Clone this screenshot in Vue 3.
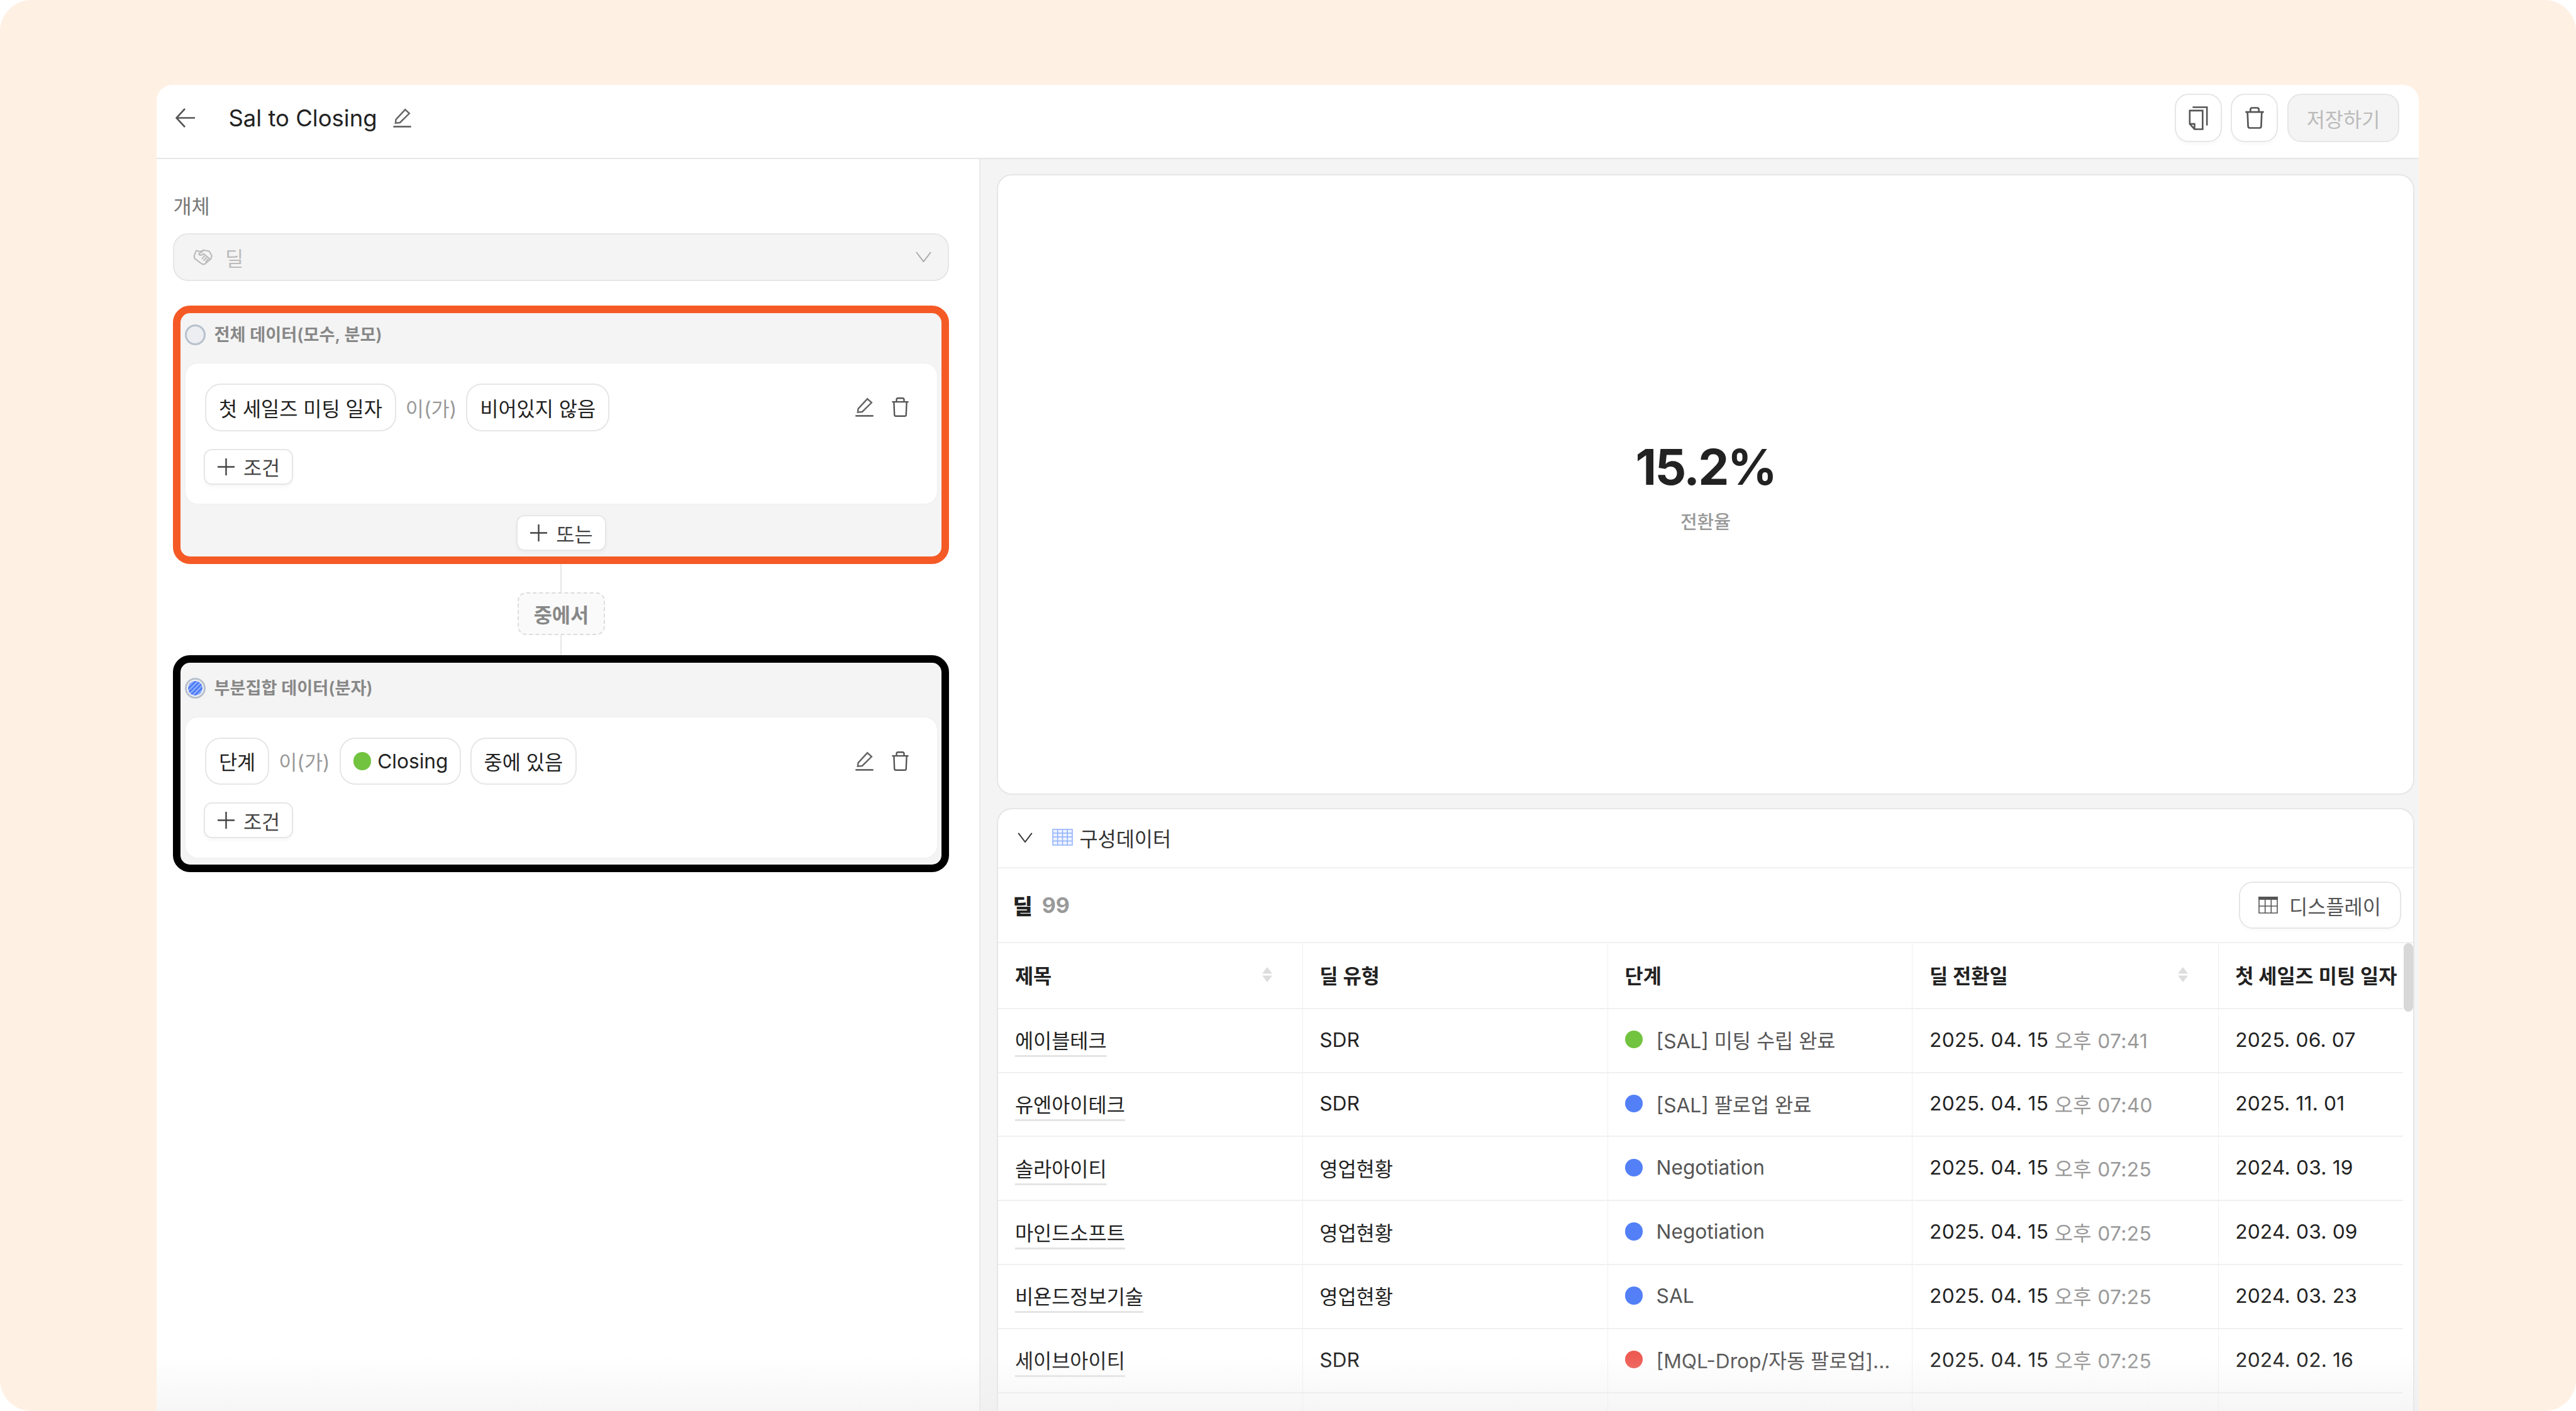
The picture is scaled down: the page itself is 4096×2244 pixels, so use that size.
<template>
  <div class="page">
    <div class="window">
      <header class="topbar">
        <svg class="back" viewBox="0 0 31 31" fill="none" stroke="#555" stroke-width="2.6">
          <path d="M31 15.5H2M15 1 1.5 15.5 15 30" />
        </svg>
        <span class="title">Sal to Closing</span>
        <svg class="edit title-edit" viewBox="0 0 24 24" fill="none" stroke="#666" stroke-width="1.9">
          <path d="M3.8 18.3 4.3 14 15.6 1.8 20.8 6.5 9.3 17.8Z" />
          <path d="M1 22.8H23" stroke-width="2.2" />
        </svg>
        <div class="top-actions">
          <button class="icon-btn">
            <svg class="copy" viewBox="0 0 20 25" fill="none" stroke="#555" stroke-width="1.7">
              <path d="M4 1H19V20" />
              <path d="M1 4.5H14.5V24H6L1 18.5Z" />
              <path d="M1 18.5H6V24" />
            </svg>
          </button>
          <button class="icon-btn">
            <svg class="trash big" viewBox="0 0 24 26" fill="none" stroke="#555" stroke-width="2">
              <path d="M1 6H23" />
              <path d="M7 6V3a2 2 0 0 1 2-2h6a2 2 0 0 1 2 2v3" />
              <path d="M3.5 6l.7 17a2 2 0 0 0 2 2h11.6a2 2 0 0 0 2-2l.7-17" />
            </svg>
          </button>
          <button class="save-btn">저장하기</button>
        </div>
      </header>

      <div class="body">
        <aside class="left">
          <div class="field-label">개체</div>
          <div class="select">
            <svg class="handshake" viewBox="0 0 38 31" fill="none" stroke="#bbb" stroke-width="2.6" stroke-linejoin="round">
              <path d="M2 13 6 3l8 2 6-3 11 2 5 9-2 6-12 10q-4 1-7-2L3 18Z" />
              <path d="M20 3 11 9q1 4 6 2l3-2 12 10" />
              <path d="M26 16l-6 6M29 19l-5 6M22 13l-5 6" />
            </svg>
            <span class="select-text">딜</span>
            <svg class="chev select-chev" viewBox="0 0 25 17" fill="none" stroke="#aaa" stroke-width="2">
              <path d="M1 1 12.5 16 24 1" />
            </svg>
          </div>

          <section class="card orange">
            <div class="card-head">
              <span class="radio"></span>
              <span>전체 데이터(모수, 분모)</span>
            </div>
            <div class="filter-box">
              <div class="filter-row">
                <span class="pill">첫 세일즈 미팅 일자</span>
                <span class="muted">이(가)</span>
                <span class="pill">비어있지 않음</span>
                <div class="row-icons">
                  <svg class="edit" viewBox="0 0 24 24" fill="none" stroke="#666" stroke-width="1.9">
                    <path d="M3.8 18.3 4.3 14 15.6 1.8 20.8 6.5 9.3 17.8Z" />
                    <path d="M1 22.8H23" stroke-width="2.2" />
                  </svg>
                  <svg class="trash" viewBox="0 0 24 26" fill="none" stroke="#555" stroke-width="2">
                    <path d="M1 6H23" />
                    <path d="M7 6V3a2 2 0 0 1 2-2h6a2 2 0 0 1 2 2v3" />
                    <path d="M3.5 6l.7 17a2 2 0 0 0 2 2h11.6a2 2 0 0 0 2-2l.7-17" />
                  </svg>
                </div>
              </div>
              <button class="add-btn">
                <svg class="plus" viewBox="0 0 27 27" stroke="#444" stroke-width="2.4"><path d="M13.5 0V27M0 13.5H27" /></svg>
                조건
              </button>
            </div>
            <div class="or-row">
              <button class="add-btn">
                <svg class="plus" viewBox="0 0 27 27" stroke="#444" stroke-width="2.4"><path d="M13.5 0V27M0 13.5H27" /></svg>
                또는
              </button>
            </div>
          </section>

          <div class="connector">
            <span class="line first"></span>
            <span class="among">중에서</span>
            <span class="line second"></span>
          </div>

          <section class="card black">
            <div class="card-head">
              <span class="radio on"></span>
              <span>부분집합 데이터(분자)</span>
            </div>
            <div class="filter-box">
              <div class="filter-row">
                <span class="pill">단계</span>
                <span class="muted">이(가)</span>
                <span class="pill dotted"><i class="dot green"></i>Closing</span>
                <span class="pill">중에 있음</span>
                <div class="row-icons">
                  <svg class="edit" viewBox="0 0 24 24" fill="none" stroke="#666" stroke-width="1.9">
                    <path d="M3.8 18.3 4.3 14 15.6 1.8 20.8 6.5 9.3 17.8Z" />
                    <path d="M1 22.8H23" stroke-width="2.2" />
                  </svg>
                  <svg class="trash" viewBox="0 0 24 26" fill="none" stroke="#555" stroke-width="2">
                    <path d="M1 6H23" />
                    <path d="M7 6V3a2 2 0 0 1 2-2h6a2 2 0 0 1 2 2v3" />
                    <path d="M3.5 6l.7 17a2 2 0 0 0 2 2h11.6a2 2 0 0 0 2-2l.7-17" />
                  </svg>
                </div>
              </div>
              <button class="add-btn">
                <svg class="plus" viewBox="0 0 27 27" stroke="#444" stroke-width="2.4"><path d="M13.5 0V27M0 13.5H27" /></svg>
                조건
              </button>
            </div>
          </section>
        </aside>

        <main class="right">
          <section class="metric">
            <div class="metric-value">15.2%</div>
            <div class="metric-label">전환율</div>
          </section>

          <section class="data">
            <div class="data-head">
              <svg class="chev data-chev" viewBox="0 0 25 17" fill="none" stroke="#333" stroke-width="2">
                <path d="M1 1 12.5 16 24 1" />
              </svg>
              <svg class="grid-icon" viewBox="0 0 33 27" fill="#eef3ff" stroke="#8fb0fb" stroke-width="1.5">
                <rect x="1" y="1" width="31" height="25" />
                <path d="M1 7H32M1 13H32M1 19.5H32M8.7 1V26M16.5 1V26M24.2 1V26" fill="none" />
              </svg>
              <span>구성데이터</span>
            </div>

            <div class="toolbar">
              <div class="count"><b>딜</b><span>99</span></div>
              <button class="display-btn">
                <svg class="display-icon" viewBox="0 0 31 27" fill="none" stroke="#555" stroke-width="1.6">
                  <path d="M0 2.5H31" stroke-width="5" />
                  <path d="M1 5V26H30V5M1 15H30M10.7 5V26M20.3 5V26" />
                </svg>
                디스플레이
              </button>
            </div>

            <div class="table">
              <div class="tr th">
                <div v-for="col in columns" :key="col.label" class="cell">
                  <span>{{ col.label }}</span>
                  <svg v-if="col.sort" class="sort" viewBox="0 0 16 24" fill="#ddd">
                    <path d="M8 0 16 10.5H0ZM8 24 0 13.5H16Z" />
                  </svg>
                </div>
              </div>
              <div v-for="row in rows" :key="row.name" class="tr">
                <div class="cell"><span class="name">{{ row.name }}</span></div>
                <div class="cell">{{ row.type }}</div>
                <div class="cell stage"><i class="dot" :class="row.color"></i>{{ row.stage }}</div>
                <div class="cell date">{{ row.date }}&nbsp;<span class="time">{{ row.time }}</span></div>
                <div class="cell first-date">{{ row.first }}</div>
              </div>
              <div class="tr">
                <div v-for="n in 5" :key="n" class="cell"></div>
              </div>
              <div class="scroll-thumb"></div>
            </div>
          </section>
        </main>
      </div>
      <div class="fade"></div>
    </div>
  </div>
</template>

<script setup>
const columns = [
  { label: "제목", sort: true },
  { label: "딜 유형" },
  { label: "단계" },
  { label: "딜 전환일", sort: true },
  { label: "첫 세일즈 미팅 일자" },
];

const rows = [
  { name: "에이블테크", type: "SDR", color: "green", stage: "[SAL] 미팅 수립 완료", date: "2025. 04. 15", time: "오후 07:41", first: "2025. 06. 07" },
  { name: "유엔아이테크", type: "SDR", color: "blue", stage: "[SAL] 팔로업 완료", date: "2025. 04. 15", time: "오후 07:40", first: "2025. 11. 01" },
  { name: "솔라아이티", type: "영업현황", color: "blue", stage: "Negotiation", date: "2025. 04. 15", time: "오후 07:25", first: "2024. 03. 19" },
  { name: "마인드소프트", type: "영업현황", color: "blue", stage: "Negotiation", date: "2025. 04. 15", time: "오후 07:25", first: "2024. 03. 09" },
  { name: "비욘드정보기술", type: "영업현황", color: "blue", stage: "SAL", date: "2025. 04. 15", time: "오후 07:25", first: "2024. 03. 23" },
  { name: "세이브아이티", type: "SDR", color: "red", stage: "[MQL-Drop/자동 팔로업]...", date: "2025. 04. 15", time: "오후 07:25", first: "2024. 02. 16" },
];
</script>

<style>
html,
body {
  background: #fff;
  overflow: hidden;
}
</style>

<style scoped>
.page {
  height: 2244px;
  padding: 134.6px 250px 0 249.4px;
  box-sizing: border-box;
  background: #fff0e4;
  border-radius: 50px;
  font-family: Inter, "Noto Sans CJK KR", sans-serif;
  font-size: 31.7px;
  color: #222;
  overflow: hidden;
}
.window {
  position: relative;
  height: 100%;
  display: flex;
  flex-direction: column;
  background: #fff;
  border-radius: 25px 25px 0 0;
  overflow: hidden;
}
button {
  font: inherit;
  background: #fff;
  padding: 0;
  box-sizing: border-box;
}
svg {
  flex: none;
  display: block;
}

/* top bar */
.topbar {
  flex: none;
  height: 118px;
  box-sizing: border-box;
  display: flex;
  align-items: center;
  padding: 0 31px 10px 30px;
  border-bottom: 2px solid #e6e6e6;
}
.back {
  width: 31px;
  height: 31px;
}
.title {
  margin-left: 53px;
  font-size: 36.5px;
}
.title-edit {
  margin-left: 24px;
}
.edit {
  width: 31px;
  height: 31px;
}
.top-actions {
  margin-left: auto;
  display: flex;
  gap: 14px;
}
.icon-btn {
  width: 75px;
  height: 76.5px;
  border: 2.5px solid #e6e6e6;
  border-radius: 22px;
  display: flex;
  align-items: center;
  justify-content: center;
  box-shadow: 0 5px 5px rgba(0, 0, 0, 0.02);
}
.copy {
  width: 31px;
  height: 38px;
}
.trash {
  width: 29px;
  height: 31px;
}
.trash.big {
  width: 32px;
  height: 35px;
}
.save-btn {
  width: 178px;
  height: 76.5px;
  margin-left: 1px;
  background: #f4f4f4;
  color: #bbb;
  border: 2.5px solid #e6e6e6;
  border-radius: 22px;
}

.body {
  flex: 1;
  min-height: 0;
  display: flex;
}

/* left panel */
.left {
  flex: none;
  width: 1308px;
  box-sizing: border-box;
  padding: 56px 48px 0 26px;
}
.field-label {
  height: 40px;
  line-height: 40px;
  color: #777;
}
.select {
  margin-top: 22px;
  height: 76.5px;
  box-sizing: border-box;
  display: flex;
  align-items: center;
  padding: 0 26px 0 30px;
  background: #f4f4f4;
  border: 2.5px solid #e6e6e6;
  border-radius: 24px;
}
.handshake {
  width: 31.5px;
  height: 26px;
}
.select-text {
  margin-left: 19px;
  color: #bbb;
}
.chev {
  width: 25px;
  height: 17px;
}
.select-chev {
  margin-left: auto;
}

.card {
  box-sizing: border-box;
  border: 12.5px solid;
  border-radius: 27px;
  background: #f4f4f4;
  overflow: hidden;
}
.orange {
  margin-top: 39px;
  height: 411px;
  border-color: #f55a26;
}
.black {
  height: 345px;
  border-color: #000;
}
.card-head {
  height: 80px;
  display: flex;
  align-items: flex-start;
  gap: 13px;
  padding: 18px 0 0 7px;
  box-sizing: border-box;
  font-size: 27.2px;
  line-height: 33px;
  font-weight: 600;
  color: #888;
}
.black .card-head {
  height: 87px;
  padding-top: 24px;
}
.radio {
  width: 33px;
  height: 33px;
  box-sizing: border-box;
  border: 3.5px solid #b7c1cc;
  border-radius: 50%;
  background: #eceef1;
}
.radio.on {
  background: repeating-linear-gradient(135deg, #4f7df7 0 3px, #90b0fb 3px 5px);
  background-clip: content-box;
  padding: 2px;
}
.filter-box {
  height: 223px;
  box-sizing: border-box;
  margin: 0 7px 0 8px;
  padding: 32px 0 0 28.5px;
  background: #fff;
  border-radius: 20px;
  box-shadow: 0 0 3px rgba(0, 0, 0, 0.05);
}
.filter-row {
  height: 75.6px;
  display: flex;
  align-items: center;
  gap: 15px;
  padding: 0 44px 0 2px;
}
.pill {
  height: 100%;
  display: flex;
  align-items: center;
  box-sizing: border-box;
  padding: 0 20px;
  border: 2.5px solid #e6e6e6;
  border-radius: 25px;
  white-space: nowrap;
}
.pill.dotted {
  gap: 10px;
  padding: 0 18px 0 20px;
}
.muted {
  color: #999;
}
.row-icons {
  margin-left: auto;
  display: flex;
  align-items: center;
  gap: 27px;
}
.add-btn {
  height: 57px;
  display: inline-flex;
  align-items: center;
  gap: 14px;
  margin-top: 28px;
  padding: 0 19px 0 20px;
  border: 2.5px solid #e6e6e6;
  border-radius: 13px;
  color: #444;
  box-shadow: 0 4px 5px rgba(0, 0, 0, 0.03);
}
.plus {
  width: 27px;
  height: 27px;
}
.or-row {
  display: flex;
  justify-content: center;
  margin-top: 18px;
}
.or-row .add-btn {
  margin-top: 0;
}

.connector {
  height: 144.5px;
  display: flex;
  flex-direction: column;
  align-items: center;
}
.line {
  width: 2px;
  background: #e6e6e6;
}
.line.first {
  height: 45px;
}
.line.second {
  height: 31.5px;
}
.among {
  flex: none;
  width: 139px;
  height: 68px;
  box-sizing: border-box;
  display: flex;
  align-items: center;
  justify-content: center;
  background: #fafafa;
  border: 2.5px dashed #ddd;
  border-radius: 14px;
  color: #888;
  font-weight: 600;
}

/* right side */
.right {
  flex: 1;
  min-width: 0;
  display: flex;
  flex-direction: column;
  gap: 21.5px;
  padding: 24px 7.5px 0 26px;
  background: #f4f4f4;
  border-left: 2px solid #e9e9e9;
}
.metric {
  flex: none;
  height: 987px;
  box-sizing: border-box;
  display: flex;
  flex-direction: column;
  align-items: center;
  justify-content: center;
  padding-top: 6px;
  background: #fff;
  border: 2.5px solid #e6e6e6;
  border-radius: 24px;
}
.metric-value {
  font-size: 78px;
  letter-spacing: -2.6px;
  line-height: 96px;
  font-weight: 700;
}
.metric-label {
  margin-top: 20px;
  font-size: 29px;
  line-height: 40px;
  font-weight: 500;
  color: #999;
}
.data {
  flex: 1;
  min-height: 0;
  display: flex;
  flex-direction: column;
  background: #fff;
  border: 2.5px solid #e6e6e6;
  border-bottom: 0;
  border-radius: 24px 24px 0 0;
  overflow: hidden;
}
.data-head {
  flex: none;
  height: 94px;
  box-sizing: border-box;
  display: flex;
  align-items: center;
  padding: 0 0 3px 31px;
  border-bottom: 2px solid #f0f0f0;
  color: #333;
}
.data-chev {
  width: 24px;
  height: 16px;
}
.grid-icon {
  width: 33px;
  height: 27px;
  margin: 0 10px 0 31px;
}
.toolbar {
  flex: none;
  height: 119px;
  box-sizing: border-box;
  display: flex;
  align-items: center;
  justify-content: space-between;
  padding: 0 19px 0 23px;
  border-bottom: 2px solid #f0f0f0;
}
.count {
  display: flex;
  align-items: center;
  gap: 15px;
  font-size: 34px;
  font-weight: 700;
}
.count span {
  color: #999;
}
.display-btn {
  width: 258px;
  height: 75px;
  display: flex;
  align-items: center;
  justify-content: center;
  gap: 18px;
  border: 2.5px solid #e6e6e6;
  border-radius: 22px;
  color: #555;
  box-shadow: 0 4px 5px rgba(0, 0, 0, 0.02);
}
.display-icon {
  width: 31px;
  height: 27px;
}

.table {
  position: relative;
  flex: 1;
  min-height: 0;
  padding-right: 16px;
}
.tr {
  height: 101.8px;
  box-sizing: border-box;
  display: grid;
  grid-template-columns: 484.4px 485.3px 484.4px 486.2px 1fr;
  border-bottom: 2px solid #f0f0f0;
}
.tr.th {
  height: 104.7px;
  font-weight: 600;
}
.cell {
  display: flex;
  align-items: center;
  justify-content: space-between;
  box-sizing: border-box;
  padding: 0 0 3px 26.5px;
  border-right: 1.5px solid #f0f0f0;
  white-space: nowrap;
}
.th .cell {
  padding-right: 48px;
}
.th .cell:last-child {
  padding-right: 0;
}
.cell:last-child {
  border-right: 0;
}
.cell.stage {
  justify-content: flex-start;
  gap: 21.5px;
  color: #555;
}
.cell.date {
  justify-content: flex-start;
  letter-spacing: 0.4px;
}
.cell.first-date {
  letter-spacing: 0.2px;
}
.name {
  text-decoration: underline;
  text-decoration-color: #e4e4e4;
  text-decoration-thickness: 2.5px;
  text-decoration-skip-ink: none;
  text-underline-offset: 11px;
}
.time {
  color: #999;
}
.sort {
  width: 16px;
  height: 24px;
}
.dot {
  flex: none;
  display: block;
  width: 28.5px;
  height: 28.5px;
  border-radius: 50%;
}
.dot.green {
  background: #72c340;
}
.dot.blue {
  background: #5380f7;
}
.dot.red {
  background: #ee5a52;
}
.scroll-thumb {
  position: absolute;
  top: 0;
  right: 0;
  width: 15px;
  height: 109px;
  background: #d8d8d8;
  border-radius: 8px;
}
.fade {
  position: absolute;
  left: 0;
  right: 0;
  bottom: 0;
  height: 90px;
  background: linear-gradient(rgba(235, 235, 235, 0), rgba(235, 235, 235, 0.45));
  pointer-events: none;
}
</style>
